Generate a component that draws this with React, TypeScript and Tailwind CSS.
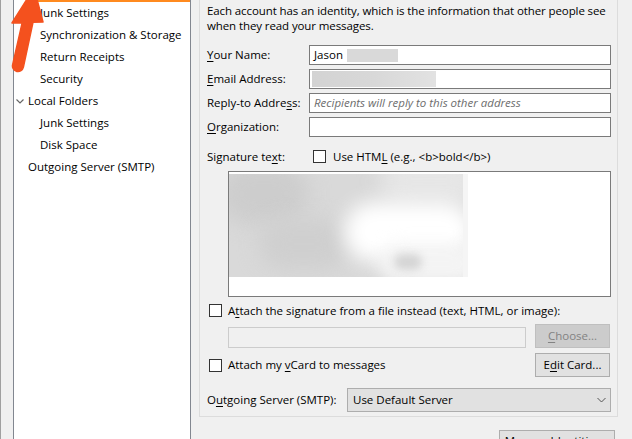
import React from "react";

function Check() {
  return <span className="block w-[13px] h-[13px] flex-none border border-[#333333] bg-white" />;
}

function U({ children }: { children: React.ReactNode }) {
  return <span className="underline underline-offset-[2px] decoration-1">{children}</span>;
}

export default function App() {
  return (
    <div className="relative w-[632px] h-[439px] overflow-hidden bg-[#f0f0f0] border-l border-[#a0a0a0] flex font-['Open_Sans',sans-serif] text-[11.5px] text-black leading-none">
      {/* Left tree */}
      <div className="pl-[12px] flex-none">
        <div className="w-[178px] h-[470px] bg-white border-x border-[#828790]">
          <div className="mt-[-20px] flex flex-col whitespace-nowrap">
            <div className="h-[22px] ml-[24px] border-2 border-[#ff8a1f]" />
            <div className="h-[22px] flex items-center pl-[26px]">Junk Settings</div>
            <div className="h-[22px] flex items-center pl-[26px]">Synchronization &amp; Storage</div>
            <div className="h-[22px] flex items-center pl-[26px]">Return Receipts</div>
            <div className="h-[22px] flex items-center pl-[26px]">Security</div>
            <div className="h-[22px] flex items-center pl-[2px]">
              <svg width="12" height="22" viewBox="0 0 12 22" className="flex-none">
                <path d="M0.5 9.5 L4 13 L7.5 9.5" fill="none" stroke="#666666" strokeWidth="1.2" />
              </svg>
              <span>Local Folders</span>
            </div>
            <div className="h-[22px] flex items-center pl-[26px]">Junk Settings</div>
            <div className="h-[22px] flex items-center pl-[26px]">Disk Space</div>
            <div className="h-[22px] flex items-center pl-[14px]">Outgoing Server (SMTP)</div>
          </div>
        </div>
      </div>

      {/* Right side */}
      <div className="ml-[8px] flex-none w-[433px] flex flex-col">
        <div className="flex-none mt-[-10px] h-[427px] w-[419px] border border-[#dcdcdc] pt-[12px] pl-[7px] pr-[6px] flex flex-col">
          <div className="leading-[15px] whitespace-nowrap tracking-[-0.1px]">
            Each account has an identity, which is the information that other people see
            <br />
            when they read your messages.
          </div>

          <div className="mt-[12px] flex flex-col gap-[4px]">
            <div className="h-[20px] flex items-center">
              <div className="w-[102px] flex-none"><U>Y</U>our Name:</div>
              <div className="flex-1 h-full bg-white border border-[#7a7a7a] flex items-center pl-[4px]">
                <span>Jason</span>
                <span className="ml-[4px] w-[51px] h-[13px] bg-[#d9d9d9] blur-[0.5px]" />
              </div>
            </div>
            <div className="h-[20px] flex items-center">
              <div className="w-[102px] flex-none"><U>E</U>mail Address:</div>
              <div className="flex-1 h-full bg-white border border-[#7a7a7a] flex items-center pl-[2px]">
                <span className="w-[124px] h-[16px] bg-gradient-to-r from-[#d3d3d3] via-[#d8d8d8] to-[#e2e2e2] blur-[0.6px]" />
              </div>
            </div>
            <div className="h-[20px] flex items-center">
              <div className="w-[102px] flex-none">Reply-to Addre<U>s</U>s:</div>
              <div className="flex-1 h-full bg-white border border-[#7a7a7a] flex items-center pl-[4px] italic text-[#6d6d6d] whitespace-nowrap">
                Recipients will reply to this other address
              </div>
            </div>
            <div className="h-[20px] flex items-center">
              <div className="w-[102px] flex-none"><U>O</U>rganization:</div>
              <div className="flex-1 h-full bg-white border border-[#7a7a7a]" />
            </div>
          </div>

          <div className="mt-[13px] h-[13px] flex items-center whitespace-nowrap">
            <div className="w-[106px] flex-none">Signature te<U>x</U>t:</div>
            <Check />
            <span className="ml-[7px]">Use HTM<U>L</U> (e.g., &lt;b&gt;bold&lt;/b&gt;)</span>
          </div>

          <div className="mt-[8px] ml-[21px] h-[126px] bg-white border border-[#7a7a7a] pt-[2px]">
            <div className="relative w-[239px] h-[103px] overflow-hidden bg-[#d9d9d9]">
              <div className="absolute left-[-10px] top-[-10px] w-[90px] h-[60px] rounded-full bg-[#cdcdcd] blur-[10px]" />
              <div className="absolute left-[30px] top-[45px] w-[90px] h-[50px] rounded-full bg-[#cfcfcf] blur-[10px]" />
              <div className="absolute left-[150px] top-[-15px] w-[100px] h-[45px] rounded-full bg-[#e6e6e6] blur-[10px]" />
              <div className="absolute left-[115px] top-[28px] w-[130px] h-[60px] rounded-full bg-white blur-[10px]" />
              <div className="absolute left-[150px] top-[70px] w-[100px] h-[40px] rounded-full bg-[#f4f4f4] blur-[8px]" />
              <div className="absolute left-[165px] top-[80px] w-[28px] h-[16px] rounded-full bg-[#d4d4d4] blur-[4px]" />
              <div className="absolute right-0 top-0 w-[5px] h-full bg-[#f5f5f5]" />
            </div>
          </div>

          <div className="mt-[7px] h-[13px] flex items-center pl-[2px] whitespace-nowrap">
            <Check />
            <span className="ml-[6px]">A<U>t</U>tach the signature from a file instead (text, HTML, or image):</span>
          </div>

          <div className="mt-[7px] h-[24px] flex items-end pl-[21px] pr-[1px]">
            <div className="flex-1 h-[21px] bg-[#f0f0f0] border border-[#cccccc]" />
            <div className="ml-[9px] w-[75px] h-[24px] flex-none bg-[#cccccc] border border-[#bfbfbf] text-[#838383] flex items-center justify-center">
              <span><U>C</U>hoose...</span>
            </div>
          </div>

          <div className="mt-[5px] h-[24px] flex items-center pl-[2px] pr-[1px] whitespace-nowrap">
            <Check />
            <span className="ml-[6px]">Attach my <U>v</U>Card to messages</span>
            <div className="ml-auto w-[75px] h-[24px] flex-none bg-[#e1e1e1] border border-[#adadad] flex items-center justify-center">
              <span>E<U>d</U>it Card...</span>
            </div>
          </div>

          <div className="mt-[11px] h-[24px] flex items-center whitespace-nowrap">
            <div className="w-[140px] flex-none">O<U>u</U>tgoing Server (SMTP):</div>
            <div className="flex-1 h-full bg-[#e1e1e1] border border-[#adadad] flex items-center justify-between pl-[5px] pr-[4px]">
              <span>Use Default Server</span>
              <svg width="9" height="6" viewBox="0 0 9 6" className="flex-none">
                <path d="M0.5 1 L4.5 5 L8.5 1" fill="none" stroke="#555555" strokeWidth="1" />
              </svg>
            </div>
          </div>
        </div>

        <div className="flex-none mt-[13px] self-end mr-[17px] w-[116px] h-[22px] bg-[#e1e1e1] border border-[#adadad] flex items-center justify-center whitespace-nowrap">
          Manage Identities...
        </div>
      </div>

      {/* Annotation arrow */}
      <svg className="absolute left-0 top-0 pointer-events-none overflow-visible" width="50" height="80" viewBox="0 0 50 80">
        <path
          d="M11.6 64.8 L21.2 22.7 L11 23 L33 -12 L42 22 L32 22.3 L22.4 67.2 A5.5 5.5 0 0 1 11.6 64.8 Z"
          fill="#f4511e"
          stroke="#f4511e"
          strokeWidth="1.5"
          strokeLinejoin="round"
        />
      </svg>
    </div>
  );
}
